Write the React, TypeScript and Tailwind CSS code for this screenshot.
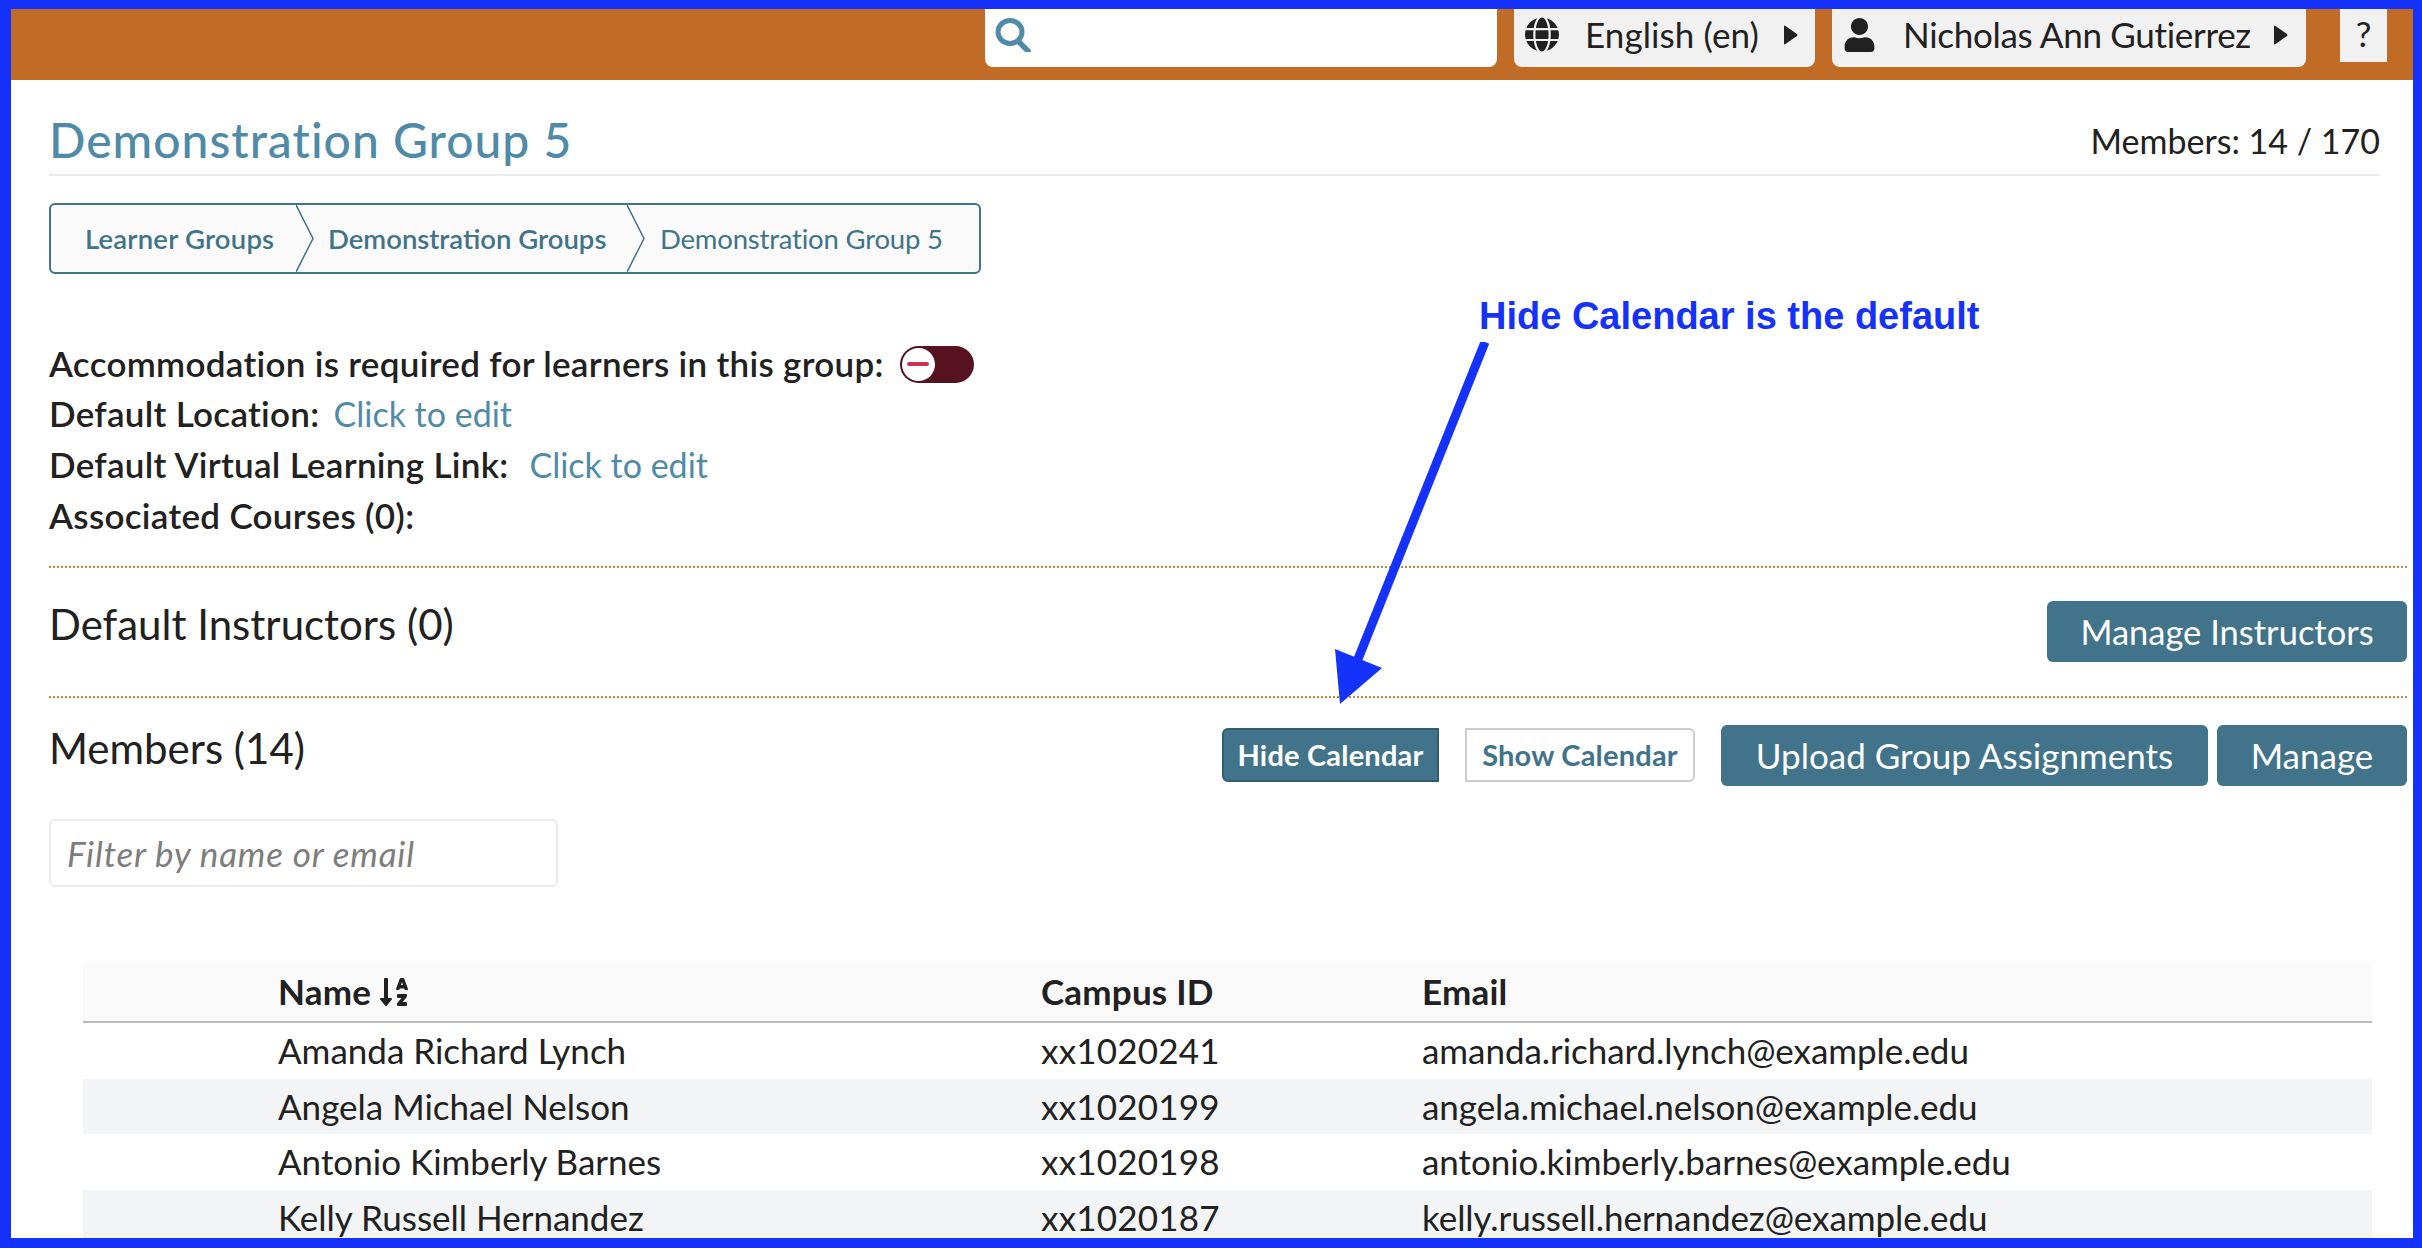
import React from "react";
import { FaGlobe, FaSortAlphaDown, FaUser } from "react-icons/fa";

const rows = [
  ["Amanda Richard Lynch", "xx1020241", "amanda.richard.lynch@example.edu"],
  ["Angela Michael Nelson", "xx1020199", "angela.michael.nelson@example.edu"],
  ["Antonio Kimberly Barnes", "xx1020198", "antonio.kimberly.barnes@example.edu"],
  ["Kelly Russell Hernandez", "xx1020187", "kelly.russell.hernandez@example.edu"],
];

function Caret() {
  return (
    <svg className="h-[20px] w-[15px]" viewBox="0 0 15 20">
      <path d="M1 1.5 Q1 0 2.5 1 L14 9 Q15 10 14 11 L2.5 19 Q1 20 1 18.5 Z" fill="currentColor" />
    </svg>
  );
}

function Chevron() {
  return (
    <svg className="absolute top-0 right-[-17px] h-full w-[18px]" viewBox="0 0 18 67" preserveAspectRatio="none">
      <path d="M0 0 L17 33.5 L0 67" fill="none" stroke="#41738a" strokeWidth="1.5" />
    </svg>
  );
}

export default function App() {
  return (
    <div className="relative box-border h-[1248px] w-full overflow-hidden border-t-[9px] border-r-[9px] border-b-[10px] border-l-[11px] border-[#1532fb] bg-white font-['Lato','Noto_Sans',sans-serif] text-[35px] text-[#212121]">
      <header className="flex h-[71px] items-start bg-[#c06c26] pl-[974px]">
        <div className="flex h-[58px] w-[512px] items-center rounded-b-lg bg-white pb-[7px] pl-[10px]">
          <svg className="h-[34px] w-[36px]" viewBox="0 0 36 34" fill="none" stroke="#4f8ba8">
            <ellipse cx="15" cy="14" rx="12" ry="11.5" strokeWidth="5" />
            <line x1="23" y1="23" x2="33" y2="33" strokeWidth="5.5" strokeLinecap="round" />
          </svg>
        </div>
        <div className="ml-[17px] flex h-[58px] w-[301px] items-center rounded-b-lg bg-[#f1f1f1] pb-[7px] pl-[10px]">
          <FaGlobe className="h-[35px] w-[36px]" />
          <span className="ml-[25px] w-[198px] tracking-[0.1px] whitespace-nowrap">English (en)</span>
          <Caret />
        </div>
        <div className="ml-[17px] flex h-[58px] w-[474px] items-center rounded-b-lg bg-[#f1f1f1] pb-[7px] pl-[12px]">
          <FaUser className="h-[34px] w-[31px]" />
          <span className="ml-[28px] w-[370px] tracking-[-0.3px] whitespace-nowrap">Nicholas Ann Gutierrez</span>
          <Caret />
        </div>
        <div className="ml-[34px] flex h-[53px] w-[47px] items-center justify-center bg-[#f1f1f1] pb-[4px]">?</div>
      </header>

      <main className="pl-[38px] pr-[6px]">
        <div className="mr-[27px] flex h-[96px] items-center justify-between border-b-2 border-[#e9ecef] pt-[26px]">
          <h1 className="text-[48px] font-medium tracking-[1px] text-[#4f8ba8]">Demonstration Group 5</h1>
          <span className="text-[34px]">Members: 14 / 170</span>
        </div>

        <nav className="mt-[27px] flex h-[71px] w-[932px] items-center overflow-hidden rounded-md border-2 border-[#41738a] bg-[#fafafa] text-[27.5px] text-[#41738a]">
          <span className="relative flex h-full w-[246px] items-center pl-[34px] font-semibold tracking-[0.2px]">
            Learner Groups
            <Chevron />
          </span>
          <span className="relative flex h-full w-[331px] items-center pl-[31px] font-semibold">
            Demonstration Groups
            <Chevron />
          </span>
          <span className="pl-[32px] tracking-[-0.2px]">Demonstration Group 5</span>
        </nav>

        <div className="mt-[64px] font-semibold tracking-[0.3px] leading-[50px]">
          <div className="flex items-center">
            Accommodation is required for learners in this group:
            <span className="mt-[2px] ml-[16px] flex h-[37px] w-[74px] items-center rounded-full bg-[#561221] pl-[2px]">
              <span className="flex h-[33px] w-[33px] items-center justify-center rounded-full bg-white">
                <span className="h-[4px] w-[22px] rounded-sm bg-[#c8324f]" />
              </span>
            </span>
          </div>
          <div>
            Default Location:<span className="ml-[14px] text-[34px] font-normal tracking-normal text-[#4f8ba8]">Click to edit</span>
          </div>
          <div>
            Default Virtual Learning Link:<span className="ml-[21px] text-[34px] font-normal tracking-normal text-[#4f8ba8]">Click to edit</span>
          </div>
          <div>Associated Courses (0):</div>
        </div>

        <div className="mt-[26px] flex h-[132px] items-start justify-between border-t-2 border-b-2 border-dotted border-[#c8833e]">
          <h2 className="mt-[29px] text-[42px] leading-[54px]">Default Instructors (0)</h2>
          <button className="mt-[33px] h-[61px] w-[360px] rounded-md bg-[#41738a] text-[34.5px] text-white">Manage Instructors</button>
        </div>

        <div className="mt-[26px] flex h-[62px] items-center">
          <h2 className="-mt-[3px] self-start text-[42px] leading-[54px]">Members (14)</h2>
          <div className="ml-auto flex items-center">
            <button className="h-[54px] w-[217px] rounded-l-md border-2 border-[#335c6e] bg-[#41738a] text-[29px] font-bold tracking-[0.2px] text-white">Hide Calendar</button>
            <button className="ml-[26px] h-[54px] w-[230px] rounded-r-md border-2 border-[#cccccc] bg-white text-[29px] font-bold tracking-[0.2px] text-[#41738a]">Show Calendar</button>
            <button className="ml-[26px] h-[61px] w-[487px] rounded-md bg-[#41738a] text-[35px] text-white">Upload Group Assignments</button>
            <button className="ml-[9px] h-[61px] w-[190px] rounded-md bg-[#41738a] text-[35px] text-white">Manage</button>
          </div>
        </div>

        <input
          className="mt-[33px] block h-[68px] w-[509px] rounded-md border-2 border-[#e9ecef] bg-white px-[16px] text-[35px] tracking-[0.8px] italic outline-none placeholder:text-[#7d7d7d]"
          placeholder="Filter by name or email"
          readOnly
        />

        <div className="mt-[75px] mr-[35px] ml-[34px] leading-none">
          <div className="flex h-[61px] items-center border-b-2 border-[#bcbcbc] bg-[#fafafa] font-bold tracking-[0.2px]">
            <div className="flex w-[958px] items-center pl-[195px]">
              Name
              <FaSortAlphaDown className="ml-[8px] h-[32px] w-[30px]" />
            </div>
            <div className="w-[381px]">Campus ID</div>
            <div>Email</div>
          </div>
          {rows.map((r, i) => (
            <div key={r[1]} className={`flex h-[55.6px] items-center ${i % 2 ? "bg-[#f3f4f6]" : "bg-white"}`}>
              <div className="w-[958px] pl-[195px]">{r[0]}</div>
              <div className="w-[381px] tracking-[0.2px]">{r[1]}</div>
              <div className="tracking-[-0.05px]">{r[2]}</div>
            </div>
          ))}
        </div>
      </main>

      <div className="absolute top-[285px] left-[1468px] font-['Liberation_Sans',sans-serif] text-[38px] leading-[44px] font-bold whitespace-nowrap text-[#1532fb]">
        Hide Calendar is the default
      </div>
      <svg className="pointer-events-none absolute top-[333px] left-[1324px] h-[362px] w-[155px]" viewBox="0 0 155 362">
        <line x1="150" y1="0" x2="23" y2="317" stroke="#1532fb" strokeWidth="9" />
        <polygon points="5,362 0,307 47,326" fill="#1532fb" />
      </svg>
    </div>
  );
}
